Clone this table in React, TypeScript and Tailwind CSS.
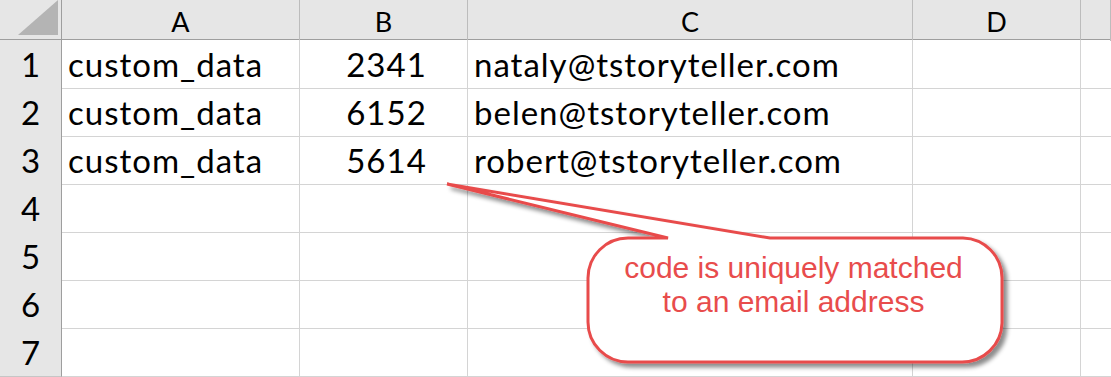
import React from "react"

const cols = ["A", "B", "C", "D", ""]
const rows: [string, string, string][] = [
  ["custom_data", "2341", "nataly@tstoryteller.com"],
  ["custom_data", "6152", "belen@tstoryteller.com"],
  ["custom_data", "5614", "robert@tstoryteller.com"],
  ["", "", ""],
  ["", "", ""],
  ["", "", ""],
  ["", "", ""],
]

const gridCols = "grid grid-cols-[62px_238px_168px_445px_168px_1fr]"

function Callout() {
  // speech bubble laid over the sheet
  return (
    <div className="pointer-events-none absolute inset-0">
      <svg width="1111" height="377" className="absolute left-0 top-0">
        <defs>
          <filter id="shadow" x="-10%" y="-10%" width="130%" height="140%">
            <feDropShadow dx="4" dy="4" stdDeviation="2.2" floodColor="#000" floodOpacity="0.45" />
          </filter>
        </defs>
        <path
          d="M668 238 L447 184 L770 238 L963 238 A40 40 0 0 1 1002 278 L1002 323 A40 40 0 0 1 962 362 L628 362 A40 40 0 0 1 588 322 L588 278 A40 40 0 0 1 628 238 Z"
          fill="#ffffff"
          stroke="#e84c4c"
          strokeWidth="3"
          strokeLinejoin="miter"
          filter="url(#shadow)"
        />
      </svg>
      <div className="absolute left-[586px] top-[238px] w-[415px] pt-[13px] text-center font-['Liberation_Sans',Arial,sans-serif] text-[30px] leading-[34px] text-[#e84c4c]">
        code is uniquely matched
        <br />
        to an email address
      </div>
    </div>
  )
}

export default function App() {
  return (
    <div className="relative h-[377px] w-[1111px] overflow-hidden bg-white font-['Lato','Liberation_Sans',sans-serif] text-black">
      {/* column headers */}
      <div className={`${gridCols} h-[40px] border-b border-[#9e9e9e] bg-[#e6e6e6]`}>
        <div className="relative border-r border-[#9e9e9e]">
          <div className="absolute left-[18px] top-0 h-[35px] w-[40px] bg-[#b4b4b4] [clip-path:polygon(100%_0,100%_100%,0_100%)]" />
        </div>
        {cols.map((c, i) => (
          <div
            key={i}
            className="flex items-center justify-center border-r border-[#bcbcbc] pt-[2px] text-[27px] leading-[39px]"
          >
            {c}
          </div>
        ))}
      </div>

      {/* rows */}
      {rows.map((r, i) => (
        <div key={i} className={`${gridCols} h-[48px]`}>
          <div className="border-r border-b border-r-[#9e9e9e] border-b-[#c6c6c6] bg-[#e6e6e6] text-center text-[33px] leading-[48px]">
            {i + 1}
          </div>
          <div className="border-r border-b border-[#d4d4d4] pl-[6px] text-[33px] leading-[48px] tracking-[1px]">{r[0]}</div>
          <div className="border-r border-b border-[#d4d4d4] pl-[6px] text-center text-[33px] leading-[48px] tracking-[1px]">{r[1]}</div>
          <div className="border-r border-b border-[#d4d4d4] pl-[6px] text-[33px] leading-[48px] tracking-[1px]">{r[2]}</div>
          <div className="border-r border-b border-[#d4d4d4]" />
          <div className="border-b border-[#d4d4d4]" />
        </div>
      ))}

      <Callout />
    </div>
  )
}
